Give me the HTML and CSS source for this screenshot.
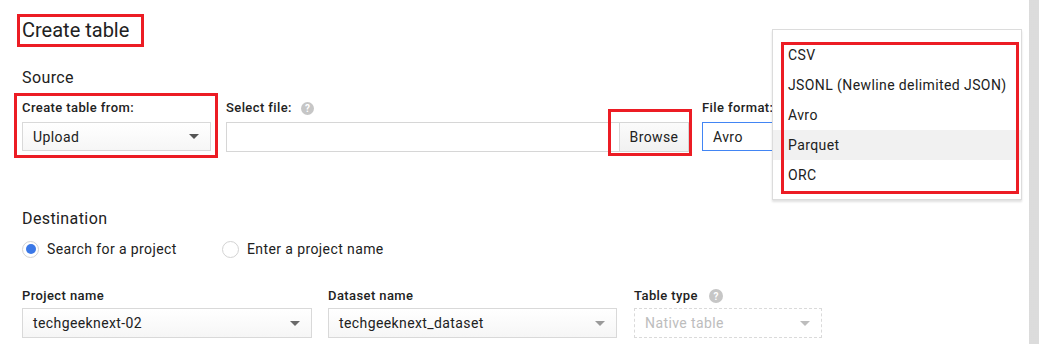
FILE: index.html
```html
<!DOCTYPE html>
<html lang="en">
<head>
<meta charset="utf-8">
<title>Create table</title>
<link rel="stylesheet" href="styles.css">
</head>
<body>
<div class="screen">
  <main class="page">
    <h1 class="title"><span class="title-text">Create table</span></h1>
    <h2 class="section source-h">Source</h2>
    <div class="row row-source">
      <div class="field f-from">
        <div class="label">Create table from:</div>
        <div class="select sel-src"><span class="val">Upload</span><span class="caret"></span></div>
      </div>
      <div class="field f-file">
        <div class="label">Select file: <span class="help">?</span></div>
        <div class="file">
          <div class="file-input"></div>
          <div class="browse">Browse</div>
        </div>
      </div>
      <div class="field f-format">
        <div class="label">File format:</div>
        <div class="select sel-src focused"><span class="val">Avro</span></div>
      </div>
    </div>

    <h2 class="section dest-h">Destination</h2>
    <div class="radios">
      <div class="radio-item r-first"><span class="radio on"></span>Search for a project</div>
      <div class="radio-item"><span class="radio"></span>Enter a project name</div>
    </div>

    <div class="row row-dest">
      <div class="field f-project">
        <div class="label">Project name</div>
        <div class="select sel-dst"><span class="val">techgeeknext-02</span><span class="caret c-mid"></span></div>
      </div>
      <div class="field f-dataset">
        <div class="label">Dataset name</div>
        <div class="select sel-dst"><span class="val">techgeeknext_dataset</span><span class="caret c-light"></span></div>
      </div>
      <div class="field f-type">
        <div class="label">Table type <span class="help">?</span></div>
        <div class="select sel-dst disabled"><span class="val">Native table</span><span class="caret c-faint"></span></div>
      </div>
    </div>
  </main>

  <div class="menu">
    <ul class="menu-list">
      <li class="menu-item">CSV</li>
      <li class="menu-item">JSONL (Newline delimited JSON)</li>
      <li class="menu-item">Avro</li>
      <li class="menu-item hover">Parquet</li>
      <li class="menu-item">ORC</li>
    </ul>
  </div>

  <div class="scrollbar"></div>
</div>
</body>
</html>
```

FILE: styles.css
```css
* { box-sizing: border-box; }

html, body {
  margin: 0;
  padding: 0;
  background: #fff;
}

body {
  font-family: Roboto, "Liberation Sans", Arial, sans-serif;
  color: #212121;
  letter-spacing: 0.4px;
}

.screen {
  position: relative;
  display: flex;
  width: 1039px;
  height: 344px;
  overflow: hidden;
}

.page {
  flex: 1;
  padding: 18px 0 0 22px;
}

.title {
  margin: 0;
  font-size: 20px;
  font-weight: 400;
  line-height: 24px;
  letter-spacing: 0;
}

.title-text {
  position: relative;
  display: inline-block;
}

.title-text::after {
  content: "";
  position: absolute;
  left: -5px;
  right: -15px;
  top: -4px;
  bottom: -5px;
  border: 3px solid #ec1c24;
}

.section {
  margin: 0;
  font-size: 16px;
  font-weight: 400;
  line-height: 20px;
}

.source-h { margin-top: 26px; }
.dest-h { margin-top: 57px; }

.row {
  display: flex;
  align-items: flex-start;
}

.row-source { margin-top: 12px; gap: 15px; }
.row-dest { margin-top: 29px; gap: 16px; }

.field { display: flex; flex-direction: column; }

.label {
  display: flex;
  align-items: center;
  font-size: 13px;
  font-weight: 500;
  line-height: 16px;
  color: #222;
}

.row-source .label { margin-bottom: 6px; }
.row-dest .label { margin-bottom: 4px; }

.help {
  display: inline-flex;
  align-items: center;
  justify-content: center;
  width: 13px;
  height: 13px;
  margin-left: 9px;
  border-radius: 50%;
  background: #c6c6c6;
  color: #fff;
  font-size: 10px;
  font-weight: 700;
  line-height: 13px;
  letter-spacing: 0;
}

.f-type .help { margin-left: 11px; width: 14px; height: 14px; }

.select {
  display: flex;
  align-items: center;
  justify-content: space-between;
  padding: 0 11px 0 10px;
  border: 1px solid #d9d9d9;
  background: linear-gradient(#ffffff, #f6f6f6);
  font-size: 14px;
  color: #212121;
}

.sel-src { height: 29px; }
.sel-dst { height: 30px; }

.caret {
  width: 0;
  height: 0;
  border-left: 5px solid transparent;
  border-right: 5px solid transparent;
  border-top: 5px solid #555;
}

.c-mid { border-top-color: #6a6a6a; }
.c-light { border-top-color: #9a9a9a; }
.c-faint { border-top-color: #bdbdbd; }

.f-from {
  position: relative;
  width: 189px;
}

.f-from::after {
  content: "";
  position: absolute;
  left: -8px;
  right: -7px;
  top: -7px;
  bottom: -7px;
  border: 3px solid #ec1c24;
}

.f-file { width: 463px; }

.file { display: flex; height: 30px; }

.file-input {
  flex: 1;
  border: 1px solid #d6d6d6;
  border-right: none;
  background: #fff;
}

.browse {
  position: relative;
  width: 70px;
  display: flex;
  align-items: center;
  justify-content: center;
  border: 1px solid #d6d6d6;
  background: linear-gradient(#fbfbfb, #f1f1f1);
  font-size: 14px;
  color: #212121;
}

.browse::after {
  content: "";
  position: absolute;
  left: -12px;
  right: -4px;
  top: -14px;
  bottom: -5px;
  border: 3px solid #ec1c24;
}

.f-format { width: 200px; margin-left: -2px; }

.focused {
  border-color: #4285f4;
  background: #fff;
}

.radios {
  display: flex;
  margin-top: 10px;
}

.radio-item {
  display: flex;
  align-items: center;
  font-size: 14px;
  line-height: 20px;
  color: #212121;
}

.r-first { width: 200px; }

.radio {
  width: 17px;
  height: 17px;
  margin-right: 8px;
  border: 1px solid #d3d3d3;
  border-radius: 50%;
  background: #fff;
  display: flex;
  align-items: center;
  justify-content: center;
}

.radio.on::before {
  content: "";
  width: 10px;
  height: 10px;
  border-radius: 50%;
  background: #3b78e7;
}

.f-project { width: 290px; }
.f-dataset { width: 289px; }
.f-type { width: 188px; margin-left: 1px; }

.disabled {
  border: 1px dashed #dadada;
  background: #fff;
  color: #bdbdbd;
}

.menu {
  position: absolute;
  left: 772px;
  top: 29px;
  width: 250px;
  height: 171px;
  padding: 10px 0;
  border: 1px solid #dcdcdc;
  background: #fff;
  box-shadow: 0 2px 2px rgba(0, 0, 0, 0.12);
}

.menu-list {
  position: relative;
  margin: 0;
  padding: 0;
  list-style: none;
}

.menu-list::after {
  content: "";
  position: absolute;
  left: 8px;
  right: 2px;
  top: 2px;
  bottom: -4px;
  border: 3px solid #ec1c24;
}

.menu-item {
  height: 30px;
  padding-left: 15px;
  display: flex;
  align-items: center;
  font-size: 14px;
  color: #212121;
}

.menu-item.hover { background: #f1f1f1; }

.scrollbar {
  flex: 0 0 10px;
  height: 344px;
  background-color: #d2d2d2;
  background-image: radial-gradient(circle, #e6e6e6 0.6px, transparent 0.8px);
  background-size: 2px 2px;
}
```
